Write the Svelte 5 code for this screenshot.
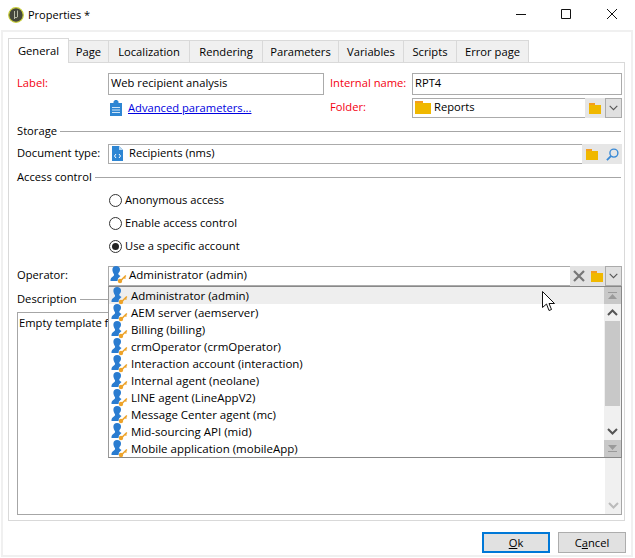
<script>
  const tabs = ['General','Page','Localization','Rendering','Parameters','Variables','Scripts','Error page'];
  const ops = ['Administrator (admin)','AEM server (aemserver)','Billing (billing)','crmOperator (crmOperator)','Interaction account (interaction)','Internal agent (neolane)','LINE agent (LineAppV2)','Message Center agent (mc)','Mid-sourcing API (mid)','Mobile application (mobileApp)'];
</script>

{#snippet folder()}
  <svg class="ico" width="16" height="14" viewBox="0 0 16 14"><path d="M0 1h8v2H0z" fill="#f59d1f"/><path d="M0 3h16v11H0z" fill="#f0b800"/></svg>
{/snippet}
{#snippet folderSm()}
  <svg class="ico" width="12" height="11" viewBox="0 0 12 11"><path d="M0 0h6v2H0z" fill="#f59d1f"/><path d="M0 2h12v9H0z" fill="#f0b800"/></svg>
{/snippet}
{#snippet chevron()}
  <svg width="9" height="6" viewBox="0 0 9 6"><path d="M.7.8 4.500 4.600 8.300.8" fill="none" stroke="#555" stroke-width="1.100"/></svg>
{/snippet}
{#snippet user()}
  <svg class="ico" width="18" height="18" viewBox="0 0 18 18">
    <path d="M6 0C8.600 0 10 1.300 10 3.500c0 1.600-.8 3-1.700 3.800l.3 1.500 1.900 1.300-2.500 2.400-.5 2.500H.5v-1c0-1.500 1-2.600 2.400-3.600 1-.7 1.300-1.400 1.100-2.200C3.100 6.700 2.300 5 2.400 3.400 2.500 1.300 3.700 0 6 0z" fill="#2a7cd0"/>
    <circle cx="10" cy="15" r="2.200" fill="#eda32a"/>
    <path d="M10.500 13.800 15.300 9l1.100 1-1.200 1.200.8.800-1.100 1.100-.8-.8-2.600 2.600z" fill="#eda32a"/>
  </svg>
{/snippet}

<div class="win">
  <header class="title">
    <svg class="logo" width="16" height="16" viewBox="0 0 16 16"><circle cx="8" cy="8" r="7.300" fill="#45463c" stroke="#c9cf3c" stroke-width="1.200"/><path d="M6.500 4v8M9.500 3.500v6.500a2 2 0 0 1-3 0" fill="none" stroke="#b9bba8" stroke-width="1"/></svg>
    <span class="ttext">Properties *</span>
    <svg class="wc" width="102" height="12" viewBox="0 0 102 12">
      <path d="M0 5.500h10" stroke="#111"/>
      <path d="M45.500 .5h9v9h-9z" fill="none" stroke="#111"/>
      <path d="M91 0l10 10M101 0 91 10" stroke="#111" fill="none"/>
    </svg>
  </header>

  <div class="body">
    <nav class="tabs">
      {#each tabs as t, i}
        <div class="tab" class:active={i === 0}>{t}</div>
      {/each}
    </nav>

    <section class="panel">
      <div class="row r1">
        <span class="lab req">Label:</span>
        <div class="inp w-label">Web recipient analysis</div>
        <span class="lab2 req">Internal name:</span>
        <div class="inp grow">RPT4</div>
      </div>
      <div class="row r2">
        <span class="lab"></span>
        <div class="adv">
          <svg width="12" height="16" viewBox="0 0 12 16"><path d="M0 3h3.500V1.500L5 0h2l1.500 1.500V3H12v13H0z" fill="#2e86d3"/><path d="M2 7h8v1H2zM2 9.500h8v1H2zM2 12h8v1H2z" fill="#cfe5f7"/></svg>
          <span class="link">Advanced parameters...</span>
        </div>
        <span class="lab2 req">Folder:</span>
        <div class="inp grow combo"><span class="f-ico">{@render folder()}</span>Reports</div>
        <div class="btn b-f">{@render folderSm()}</div>
        <div class="dd">{@render chevron()}</div>
      </div>

      <div class="sec s-storage"><span>Storage</span><i></i></div>

      <div class="row r3">
        <span class="lab">Document type:</span>
        <div class="inp grow combo doc">
          <svg width="11" height="15" viewBox="0 0 11 15"><path d="M0 0h7l4 4v11H0z" fill="#2e86d3"/><path d="M7 0v4h4z" fill="#bcdaf3"/><path d="M4 8 2.500 10 4 12M7 8l1.500 2L7 12" fill="none" stroke="#fff"/></svg>
          <span>Recipients (nms)</span>
        </div>
        <div class="btn b-two">
          {@render folderSm()}
          <svg width="13" height="13" viewBox="0 0 14 14"><circle cx="8.500" cy="5.500" r="4.300" fill="none" stroke="#3a8ad6" stroke-width="1.500"/><path d="M5.300 8.700 1 13" stroke="#3a8ad6" stroke-width="2"/></svg>
        </div>
      </div>

      <div class="sec s-access"><span>Access control</span><i></i></div>

      <div class="radios">
        <div class="radio"><b></b>Anonymous access</div>
        <div class="radio"><b></b>Enable access control</div>
        <div class="radio on"><b></b>Use a specific account</div>
      </div>

      <div class="row r4">
        <span class="lab">Operator:</span>
        <div class="inp grow combo op"><span class="u-ico">{@render user()}</span><span class="optext">Administrator (admin)</span></div>
        <div class="btn b-op">
          <svg width="12" height="12" viewBox="0 0 12 12"><path d="M1 1l10 10M11 1 1 11" stroke="#777" stroke-width="2.200"/></svg>
          {@render folderSm()}
        </div>
        <div class="dd">{@render chevron()}</div>

        <div class="popup">
          <ul>
            {#each ops as o, i}
              <li class:hover={i === 0}>{@render user()}<span>{o}</span></li>
            {/each}
          </ul>
          <div class="sb">
            <div class="sb-end"><svg width="11" height="9" viewBox="0 0 11 9"><path d="M1 1h9v1H1zM5.500 3 10 8H1z" fill="#9a9a9a"/></svg></div>
            <div class="sb-arrow up"><svg width="11" height="7" viewBox="0 0 11 7"><path d="M1 6l4.500-4.500L10 6" fill="none" stroke="#555" stroke-width="2"/></svg></div>
            <div class="thumb"></div>
            <div class="sb-arrow down"><svg width="11" height="7" viewBox="0 0 11 7"><path d="M1 1l4.500 4.500L10 1" fill="none" stroke="#555" stroke-width="2"/></svg></div>
            <div class="sb-end bottom"><svg width="11" height="9" viewBox="0 0 11 9"><path d="M1 8h9V7H1zM5.500 6 10 1H1z" fill="#9a9a9a"/></svg></div>
          </div>
        </div>
      </div>

      <div class="sec s-desc"><span>Description</span><i></i></div>

      <div class="area">
        <div class="atext">Empty template f</div>
        <div class="asb"><svg width="11" height="7" viewBox="0 0 11 7"><path d="M1 1l4.500 4.500L10 1" fill="none" stroke="#bbb" stroke-width="2"/></svg></div>
      </div>
    </section>

    <footer class="foot">
      <div class="b ok"><span><u>O</u>k</span></div>
      <div class="b"><span>C<u>a</u>ncel</span></div>
    </footer>
  </div>

  <svg class="cursor" width="14" height="21" viewBox="0 0 14 21"><path d="M.5.500v16l4-3.500 2.500 6.500 2.500-1-2.500-6h5.500z" fill="#fff" stroke="#111" stroke-width="1"/></svg>
</div>

<style>
  :global(body) { margin: 0; background: #fff; }
  .win {
    position: relative;
    width: 635px;
    height: 558px;
    overflow: hidden;
    background: #fff;
    font: 11.2px/16px "Open Sans", "Noto Sans", sans-serif;
    color: #000;
    box-sizing: border-box;
  }
  .title { height: 30px; display: flex; align-items: center; padding-left: 8px; }
  .logo { display: block; }
  .ttext { margin-left: 4px; font-size: 11px; }
  .wc { margin-left: auto; margin-right: 17px; }
  .body {
    box-sizing: border-box;
    height: 527px;
    margin: 0 2px 0 1px;
    border: 2px solid #f0f0f0;
    padding: 6px 6px 0 5px;
  }
  .tabs { display: flex; height: 24px; align-items: flex-end; position: relative; z-index: 1; }
  .tab {
    box-sizing: border-box;
    height: 22px;
    padding: 2px 0 0;
    text-align: center;
    background: #f0f0f0;
    border: 1px solid #d9d9d9;
    border-left: 0;
    border-bottom: 0;
    line-height: 18px;
    white-space: nowrap;
  }
  .tab:nth-child(2) { width: 40px; }
  .tab:nth-child(3) { width: 81px; }
  .tab:nth-child(4) { width: 73px; }
  .tab:nth-child(5) { width: 76px; }
  .tab:nth-child(6) { width: 65px; }
  .tab:nth-child(7) { width: 53px; }
  .tab:nth-child(8) { width: 72px; }
  .tab.active { height: 25px; background: #fff; border-left: 1px solid #d9d9d9; padding-top: 3px; margin-bottom: -1px; width: 61px; }
  .panel {
    box-sizing: border-box;
    height: 459px;
    border: 1px solid #d9d9d9;
    padding: 10px 2px 0 8px;
    background: #fff;
  }
  .row { display: flex; align-items: center; position: relative; }
  .r1 { height: 22px; }
  .r2 { height: 20px; margin-top: 3px; }
  .r3 { height: 20px; margin-top: 5px; }
  .r4 { height: 20px; margin-top: 12px; }
  .lab { width: 91px; flex: none; padding-bottom: 2px; }
  .lab2 { margin-left: 6px; width: 82px; flex: none; padding-bottom: 2px; }
  .req { color: #f40010; }
  .inp {
    box-sizing: border-box;
    height: 100%;
    border: 1px solid #ababab;
    padding: 0 0 2px 2px;
    display: flex;
    align-items: center;
    min-width: 0;
    white-space: nowrap;
    background: #fff;
  }
  .w-label { width: 216px; flex: none; }
  .grow { flex: 1; }
  .combo { border-right: 0; }
  .f-ico { margin: 0 3px 0 0; display: flex; }
  .doc { padding-left: 3px; gap: 6px; }
  .u-ico { display: flex; margin-right: 1px; margin-left: -1px; }
  .optext { font-size: 11.5px; }
  .ico { display: block; flex: none; }
  .adv { width: 216px; flex: none; display: flex; align-items: center; gap: 6px; padding-left: 2px; box-sizing: border-box; }
  .link { color: #0000e0; text-decoration: underline; white-space: nowrap; }
  .btn { height: 100%; background: #e6e6e6; display: flex; align-items: center; justify-content: center; flex: none; }
  .b-f { width: 20px; }
  .b-two { width: 40px; gap: 8px; }
  .b-op { width: 35px; gap: 6px; background: #e2e2e2; }
  .dd {
    box-sizing: border-box;
    width: 17px;
    height: 100%;
    background: #e0e0e0;
    border: 1px solid #ababab;
    display: flex;
    align-items: center;
    justify-content: center;
    flex: none;
  }
  .sec { display: flex; align-items: center; height: 16px; gap: 3px; padding-right: 1px; }
  .sec i { flex: 1; height: 1px; background: #a6a6a6; display: block; }
  .s-storage { margin-top: 5px; }
  .s-access { margin-top: 5px; }
  .s-desc { margin-top: 5px; }
  .radios { margin-top: 7px; padding-left: 92px; display: flex; flex-direction: column; gap: 7px; }
  .radio { height: 16px; display: flex; align-items: center; gap: 3px; }
  .radio b { box-sizing: border-box; width: 13px; height: 13px; border: 1px solid #333; border-radius: 50%; display: block; position: relative; }
  .radio.on b::after { content: ""; position: absolute; inset: 2px; border-radius: 50%; background: #222; }
  .area {
    box-sizing: border-box;
    height: 203px;
    margin-top: 5px;
    border: 1px solid #a6a6a6;
    padding: 2px 0 0 1px;
    position: relative;
    display: flex;
  }
  .atext { flex: 1; white-space: nowrap; }
  .asb { width: 16px; margin-top: -2px; background: #f0f0f0; display: flex; align-items: flex-end; justify-content: center; padding-bottom: 5px; }
  .popup {
    position: absolute;
    left: 91px;
    top: 20px;
    right: 0;
    height: 172px;
    box-sizing: border-box;
    border: 1px solid #888;
    border-left-color: #999;
    background: #fff;
    display: flex;
    z-index: 2;
  }
  ul { list-style: none; margin: 0; padding: 0; flex: 1; font-size: 11.5px; }
  li { height: 17px; display: flex; align-items: center; padding-left: 2px; gap: 2px; white-space: nowrap; }
  li.hover { background: #eeeeee; }
  .sb { width: 17px; flex: none; display: flex; flex-direction: column; background: #f0f0f0; }
  .sb-end { height: 17px; background: #c8c8c8; display: flex; align-items: center; justify-content: center; flex: none; }
  .sb-arrow { height: 17px; display: flex; align-items: center; justify-content: center; flex: none; }
  .up { background: #f0f0f0; }
  .thumb { height: 85px; background: #c8c8c8; margin-left: 1px; margin-right: 1px; flex: none; }
  .down { margin-top: auto; }
  .foot { display: flex; justify-content: flex-end; gap: 8px; padding: 11px 0 0; margin-right: -1px; }
  .b {
    box-sizing: border-box;
    width: 68px;
    height: 21px;
    background: #e1e1e1;
    border: 1px solid #adadad;
    display: flex;
    align-items: center;
    justify-content: center;
  }
  .ok { border: 2px solid #0078d7; }
  .cursor { position: absolute; left: 542px; top: 291px; z-index: 5; }
</style>
